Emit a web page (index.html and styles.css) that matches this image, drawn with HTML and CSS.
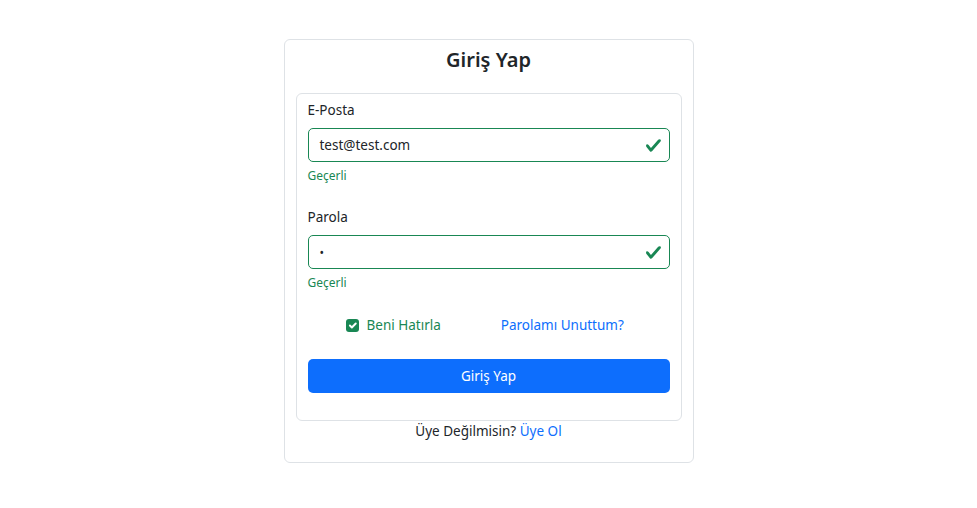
FILE: index.html
```html
<!DOCTYPE html>
<html lang="tr">
<head>
<meta charset="utf-8">
<title>Giriş Yap</title>
<link rel="stylesheet" href="styles.css">
</head>
<body>
<main class="page">
  <section class="outer-card">
    <h3 class="title">Giriş Yap</h3>
    <form class="inner-card">
      <label class="form-label" for="email">E-Posta</label>
      <div class="input valid">
        <span class="input-text">test@test.com</span>
        <svg class="valid-icon" viewBox="0 0 8 8" width="17" height="17"><path fill="#198754" d="M2.3 6.73.6 4.53c-.4-1.040.46-1.4 1.1-.8l1.1 1.4 3.4-3.8c.6-.63 1.6-.27 1.2.7l-4 4.6c-.43.5-.8.4-1.1.1z"/></svg>
      </div>
      <div class="feedback">Geçerli</div>

      <label class="form-label second" for="password">Parola</label>
      <div class="input valid">
        <span class="input-text dot">•</span>
        <svg class="valid-icon" viewBox="0 0 8 8" width="17" height="17"><path fill="#198754" d="M2.3 6.73.6 4.53c-.4-1.040.46-1.4 1.1-.8l1.1 1.4 3.4-3.8c.6-.63 1.6-.27 1.2.7l-4 4.6c-.43.5-.8.4-1.1.1z"/></svg>
      </div>
      <div class="feedback">Geçerli</div>

      <div class="options">
        <label class="check">
          <span class="check-box"><svg viewBox="0 0 20 20" width="13" height="13"><path fill="none" stroke="#fff" stroke-linecap="round" stroke-linejoin="round" stroke-width="3" d="m6 10 3 3 6-6"/></svg></span>
          <span class="check-label">Beni Hatırla</span>
        </label>
        <a class="link" href="#">Parolamı Unuttum?</a>
      </div>

      <button class="btn" type="button">Giriş Yap</button>
    </form>
    <p class="footer">Üye Değilmisin? <a class="link" href="#">Üye Ol</a></p>
  </section>
</main>
</body>
</html>
```

FILE: styles.css
```css
* { box-sizing: border-box; }

html, body {
  margin: 0;
  padding: 0;
  background: #fff;
}

body {
  font-family: "Noto Sans", "Open Sans", sans-serif;
  font-size: 13.5px;
  line-height: 21px;
  color: #212529;
}

.page {
  display: flex;
  justify-content: center;
  padding-top: 39px;
}

.outer-card {
  width: 410px;
  border: 1px solid #dee2e6;
  border-radius: 6px;
  padding: 6px 11px 20px;
  display: flex;
  flex-direction: column;
}

.title {
  margin: 0 0 19px;
  text-align: center;
  font-size: 20px;
  line-height: 28px;
  font-weight: 600;
}

.inner-card {
  border: 1px solid #dee2e6;
  border-radius: 6px;
  padding: 6px 11px 27px;
  display: flex;
  flex-direction: column;
  margin: 0;
}

.form-label {
  display: block;
  margin-bottom: 7px;
}

.form-label.second {
  margin-top: 22px;
}

.input {
  height: 34px;
  border: 1px solid #198754;
  border-radius: 5px;
  display: flex;
  align-items: center;
  justify-content: space-between;
  padding: 0 7px 0 11px;
}

.input-text {
  font-size: 13.5px;
}

.input-text.dot {
  font-size: 12px;
}

.valid-icon {
  display: block;
}

.feedback {
  margin-top: 5px;
  font-size: 12px;
  line-height: 18px;
  color: #198754;
}

.options {
  margin-top: 23px;
  display: flex;
  align-items: center;
  padding-left: 38px;
  gap: 60px;
}

.check {
  display: flex;
  align-items: center;
  gap: 8px;
  color: #198754;
}

.check-box {
  width: 13px;
  height: 13px;
  border-radius: 3px;
  background: #198754;
  display: flex;
  align-items: center;
  justify-content: center;
}

.link {
  color: #0d6efd;
  text-decoration: none;
}

.btn {
  margin-top: 23px;
  height: 34px;
  border: none;
  border-radius: 5px;
  background: #0d6efd;
  color: #fff;
  font-family: inherit;
  font-size: 13.5px;
  line-height: 21px;
  padding: 0;
}

.footer {
  margin: 0;
  text-align: center;
}
```
